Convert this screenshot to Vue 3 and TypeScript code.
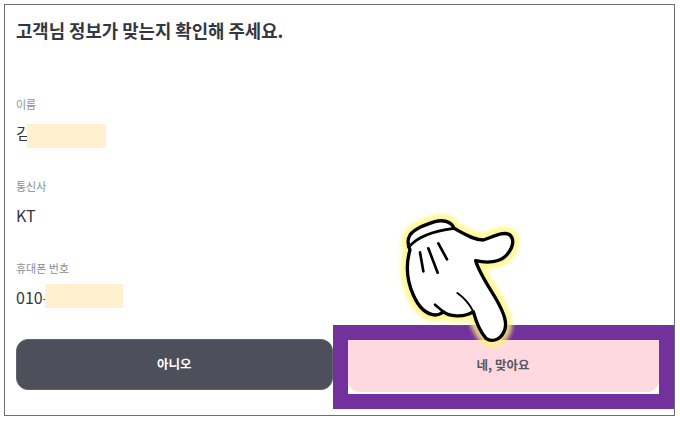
<script setup lang="ts">
interface Field {
  label: string
  value: string
  maskClass: string
}
const fields: Field[] = [
  { label: '이름', value: '김', maskClass: 'mask mask-low' },
  { label: '통신사', value: 'KT', maskClass: '' },
  { label: '휴대폰 번호', value: '010-', maskClass: 'mask mask-high' },
]
const handPath =
  'M90 150C78 190 78 235 100 285C115 320 135 342 165 345C175 345 185 340 190 335C205 348 250 355 280 335C288 365 300 395 318 415C335 428 360 420 372 395C384 370 372 340 350 300C330 265 298 220 287 182C320 190 360 188 380 165C398 145 405 120 390 105C370 92 340 110 310 120C280 120 250 100 222 85C215 65 190 58 165 65C135 75 105 85 90 105C82 118 82 132 90 150Z'
</script>

<template>
  <main class="frame">
    <h1 class="title">고객님 정보가 맞는지 확인해 주세요.</h1>
    <section class="fields">
      <div v-for="f in fields" :key="f.label" class="field">
        <span class="label">{{ f.label }}</span>
        <span class="value">{{ f.value }}<i v-if="f.maskClass" :class="f.maskClass"></i></span>
      </div>
    </section>
    <div class="actions">
      <button class="btn no">아니오</button>
      <div class="yes-wrap">
        <div class="yes-back">
          <button class="btn yes">네, 맞아요</button>
        </div>
      </div>
    </div>
    <svg class="hand" viewBox="0 0 480 480" width="160" height="160" aria-hidden="true">
      <defs>
        <filter id="glow" x="-20%" y="-20%" width="140%" height="140%">
          <feGaussianBlur stdDeviation="7" />
        </filter>
      </defs>
      <path :d="handPath" fill="#fff57a" stroke="#fff57a" stroke-width="40" stroke-linejoin="round" filter="url(#glow)" opacity="0.8" />
      <path :d="handPath" fill="#fff" stroke="#000" stroke-width="10" stroke-linejoin="round" />
      <g fill="none" stroke="#000" stroke-width="8" stroke-linecap="round">
        <path d="M86 142C110 112 150 94 222 85" />
        <path d="M120 157L130 214" />
        <path d="M145 145L173 218" />
        <path d="M175 130L201 178" />
        <path d="M165 314L190 335" />
        <path d="M232 279C255 295 270 315 280 335" stroke-width="6" />
      </g>
    </svg>
  </main>
</template>

<style scoped>
.frame {
  position: relative;
  box-sizing: border-box;
  width: 671px;
  height: 412px;
  margin: 4px 0 0 4px;
  padding: 0 0 0 11px;
  border: 1.5px solid #6e6e6e;
  background: #fff;
  font-family: "Noto Sans CJK KR", "Noto Sans", sans-serif;
  color: #33363f;
}
.title {
  margin: 0;
  padding-top: 12px;
  font-size: 17.8px;
  line-height: 26px;
  font-weight: 700;
  color: #343741;
}
.fields {
  display: flex;
  flex-direction: column;
  gap: 22px;
  margin-top: 53px;
}
.field {
  display: flex;
  flex-direction: column;
  gap: 9px;
  height: 60px;
}
.label {
  font-size: 11px;
  line-height: 16px;
  color: #8b8e95;
}
.value {
  display: flex;
  align-items: center;
  height: 24px;
  font-size: 16px;
  line-height: 24px;
  color: #33363f;
}
.mask {
  display: block;
  width: 78.5px;
  height: 24px;
  background: #fff0cf;
}
.mask-low {
  margin: 6px 0 0 -3.5px;
}
.mask-high {
  margin: -2px 0 0 -3.5px;
}
.actions {
  display: flex;
  margin-top: 19px;
  height: 52px;
}
.btn {
  border: 0;
  font-family: inherit;
  font-size: 12.5px;
  font-weight: 700;
  cursor: pointer;
}
.no {
  flex: none;
  width: 316.5px;
  height: 51px;
  padding: 0 0 2px;
  border: 1px solid #62646d;
  border-radius: 12px;
  background: #4d4f5a;
  color: #fff;
}
.yes-wrap {
  flex: none;
  box-sizing: border-box;
  width: 341px;
  height: 84px;
  margin-top: -14px;
  padding: 15px;
  background: #72319c;
}
.yes-back {
  height: 54px;
  background: #fff;
}
.yes {
  display: block;
  width: 100%;
  height: 52px;
  padding: 0 0 3px;
  border-radius: 0 0 12px 12px;
  background: #ffd9e0;
  color: #555762;
}
.hand {
  position: absolute;
  left: 374.5px;
  top: 194.5px;
  pointer-events: none;
}
</style>
